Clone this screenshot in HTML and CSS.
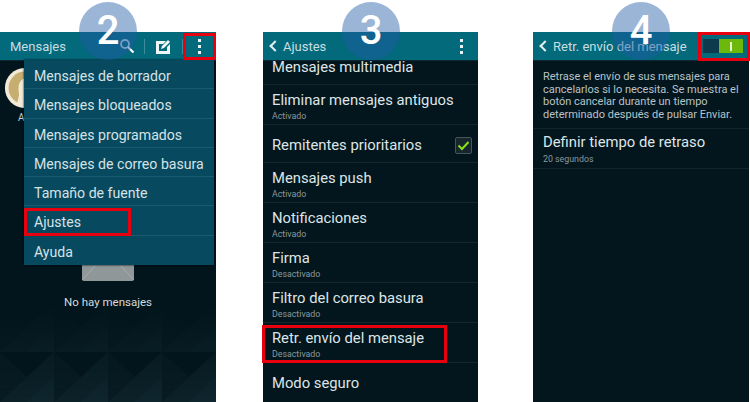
FILE: index.html
```html
<!DOCTYPE html>
<html lang="es">
<head>
    <meta charset="UTF-8">
    <title>Retrasar envío del mensaje</title>
    <link rel="stylesheet" href="styles.css">
</head>
<body>
    <div class="steps">
        <!-- paso 2 -->
        <div class="phone phone-one">
            <div class="bar bar-one">
                <span class="bar-title">Mensajes</span>
                <svg class="icon-search" width="16" height="16" viewBox="0 0 16 16"><circle cx="6" cy="6" r="4" fill="none" stroke="#b9d6de" stroke-width="1.8"/><path d="M9 9L14.5 14.5" stroke="#fff" stroke-width="2.2"/></svg>
                <span class="bar-sep"></span>
                <svg class="icon-compose" width="15" height="15" viewBox="0 0 15 15"><path d="M0 2h10L7 5H3v7h8V8l3-3v10H0z" fill="#eef6f7"/><path d="M5 10l1-3 6-6 2 2-6 6z" fill="#eef6f7"/></svg>
                <span class="bar-sep"></span>
                <span class="dots"><i></i><i></i><i></i></span>
            </div>
            <div class="avatar-col">
                <svg class="avatar" width="42" height="42" viewBox="0 0 46 46"><circle cx="23" cy="23" r="22" fill="#f2ead6"/><circle cx="23" cy="23" r="18" fill="#c6ad70"/><path d="M14 41c2-8 3-10 2-15-1-8 3-14 9-14 6 0 9 5 9 11 0 3 3 5 2 7-1 3-3 2-3 5 0 3 0 5 1 7-6 3-14 3-20-1z" fill="#f2ead6"/></svg>
                <span class="avatar-name">A</span>
            </div>
            <svg class="tiles" width="216" height="100" viewBox="0 0 216 100">
                <defs>
                    <pattern id="tri" width="54" height="50" patternUnits="userSpaceOnUse">
                        <path d="M0 50L54 0V50z" fill="#0c2229"/>
                        <path d="M0 0L27 25L0 50z" fill="#081c23"/>
                        <path d="M27 50L54 25V50z" fill="#0f262e"/>
                    </pattern>
                    <linearGradient id="fade" x1="0" y1="0" x2="0" y2="1">
                        <stop offset="0" stop-color="#fff" stop-opacity="0"/>
                        <stop offset="1" stop-color="#fff"/>
                    </linearGradient>
                    <mask id="fadeMask"><rect width="216" height="100" fill="url(#fade)"/></mask>
                </defs>
                <rect width="216" height="100" fill="url(#tri)" mask="url(#fadeMask)"/>
            </svg>
            <svg class="envelope" width="52" height="16" viewBox="0 0 52 16"><path d="M0 0h52v14a2 2 0 0 1-2 2H2a2 2 0 0 1-2-2z" fill="#8f9799"/><path d="M0 15L14 0M52 15L38 0" stroke="#a7adae" fill="none"/></svg>
            <p class="empty">No hay mensajes</p>
            <ul class="menu">
                <li>Mensajes de borrador</li>
                <li>Mensajes bloqueados</li>
                <li>Mensajes programados</li>
                <li>Mensajes de correo basura</li>
                <li>Tamaño de fuente</li>
                <li>Ajustes</li>
                <li>Ayuda</li>
            </ul>
            <div class="mark mark-dots"></div>
            <div class="mark mark-ajustes"></div>
            <div class="badge">2</div>
        </div>

        <!-- paso 3 -->
        <div class="phone phone-two">
            <div class="bar">
                <span class="back"></span>
                <span class="bar-title">Ajustes</span>
                <span class="dots dots-two"><i></i><i></i><i></i></span>
            </div>
            <div class="row row-clip"><div class="row-title">Mensajes multimedia</div></div>
            <div class="row"><div class="row-title">Eliminar mensajes antiguos</div><div class="row-sub">Activado</div></div>
            <div class="row row-check">
                <div class="row-title">Remitentes prioritarios</div>
                <svg class="check" width="17" height="17" viewBox="0 0 17 17"><rect x=".5" y=".5" width="16" height="16" rx="1.5" fill="#16262c" stroke="#47545a"/><path d="M3.5 8.5l3.5 3.5 6.5-7" fill="none" stroke="#8be01a" stroke-width="2"/></svg>
            </div>
            <div class="row"><div class="row-title">Mensajes push</div><div class="row-sub">Activado</div></div>
            <div class="row"><div class="row-title">Notificaciones</div><div class="row-sub">Activado</div></div>
            <div class="row"><div class="row-title">Firma</div><div class="row-sub">Desactivado</div></div>
            <div class="row"><div class="row-title">Filtro del correo basura</div><div class="row-sub">Desactivado</div></div>
            <div class="row"><div class="row-title">Retr. envío del mensaje</div><div class="row-sub">Desactivado</div></div>
            <div class="row row-last"><div class="row-title">Modo seguro</div></div>
            <div class="mark mark-retr"></div>
            <div class="badge">3</div>
        </div>

        <!-- paso 4 -->
        <div class="phone phone-three">
            <div class="bar">
                <span class="back"></span>
                <span class="bar-title">Retr. envío del mensaje</span>
                <span class="switch"><span class="switch-on"><i></i></span></span>
            </div>
            <p class="intro">Retrase el envío de sus mensajes para cancelarlos si lo necesita. Se muestra el botón cancelar durante un tiempo determinado después de pulsar Enviar.</p>
            <div class="row"><div class="row-title">Definir tiempo de retraso</div><div class="row-sub">20 segundos</div></div>
            <div class="mark mark-switch"></div>
            <div class="badge">4</div>
        </div>
    </div>
</body>
</html>
```

FILE: styles.css
```css
html, body {
    margin: 0;
    padding: 0;
    background: #fff;
}
body {
    font-family: Roboto, "Noto Sans", sans-serif;
    color: #dfe5e6;
    overflow: hidden;
}
.steps {
    display: flex;
    width: 750px;
    height: 402px;
    padding-top: 32px;
    box-sizing: border-box;
}
.phone {
    position: relative;
    height: 370px;
    background: #03161e;
    flex: none;
}
.phone-one {
    width: 216px;
    background: #02151c;
}
.phone-two {
    width: 215px;
    margin-left: 47px;
}
.phone-three {
    width: 216px;
    margin-left: 55px;
}
.bar {
    display: flex;
    align-items: center;
    height: 28px;
    background: #036a7c;
    border-bottom: 1px solid #0b2a33;
    font-size: 13px;
    color: #c9dde1;
}
.bar-one {
    padding-left: 10px;
}
.bar-title {
    flex: 1;
    white-space: nowrap;
}
.back {
    width: 8px;
    height: 8px;
    margin: 0 4px 0 8px;
    border-left: 2px solid #e6f0f2;
    border-bottom: 2px solid #e6f0f2;
    transform: rotate(45deg);
    box-sizing: border-box;
}
.icon-search {
    margin-right: 9px;
}
.icon-compose {
    margin: 0 11px;
}
.bar-sep {
    width: 1px;
    height: 15px;
    background: #3f8c9a;
}
.dots {
    display: flex;
    flex-direction: column;
    gap: 3px;
    width: 3px;
    margin: 0 15px 0 15px;
}
.dots i {
    width: 3px;
    height: 3px;
    background: #e8f1f3;
}
.dots-two {
    margin: 0 15px 0 0;
}
.avatar-col {
    position: absolute;
    left: 4px;
    top: 35px;
    width: 20px;
    overflow: hidden;
}
.avatar {
    display: block;
}
.avatar-name {
    display: block;
    margin: 3px 0 0 14px;
    font-size: 10px;
    color: #c6cfd2;
}
.tiles {
    position: absolute;
    left: 0;
    bottom: 0;
}
.envelope {
    position: absolute;
    left: 82px;
    top: 233px;
}
.empty {
    position: absolute;
    left: 0;
    right: 0;
    top: 263px;
    margin: 0;
    text-align: center;
    font-size: 11.5px;
    color: #d5dadb;
}
.menu {
    position: absolute;
    left: 24px;
    top: 28px;
    width: 190px;
    height: 205px;
    margin: 0;
    padding: 0;
    list-style: none;
    background: #07495f;
    box-shadow: 0 0 2px #000;
}
.menu li {
    height: 29.3px;
    line-height: 33px;
    padding-left: 10px;
    box-sizing: border-box;
    font-size: 14.1px;
    color: #d6e2e5;
    border-bottom: 1px solid #1a5a6e;
}
.menu li:last-child {
    border-bottom: none;
}
.row {
    display: flex;
    flex-direction: column;
    justify-content: center;
    height: 40px;
    padding: 4px 0 0 9px;
    box-sizing: border-box;
    border-bottom: 1px solid #14262d;
}
.row-clip {
    height: 24px;
    justify-content: flex-end;
    padding: 0 0 8px 9px;
}
.row-check {
    flex-direction: row;
    align-items: center;
    justify-content: space-between;
    height: 38px;
    padding: 4px 6px 0 9px;
}
.row-last {
    padding-top: 1px;
    border-bottom: none;
}
.row-title {
    font-size: 14.8px;
    line-height: 17px;
    white-space: nowrap;
}
.row-sub {
    font-size: 8.8px;
    line-height: 11px;
    margin-top: 2px;
    color: #8c989c;
}
.intro {
    margin: 0;
    padding: 10px 10px 7px;
    font-size: 11px;
    line-height: 12.5px;
    color: #b9c3c6;
    border-bottom: 1px solid #14262d;
}
.phone-three .row {
    padding: 1px 0 0 10px;
}
.phone-three .row-sub {
    margin-top: 3px;
}
.switch {
    display: flex;
    justify-content: flex-end;
    width: 40px;
    height: 14px;
    margin-right: 6px;
    background: #0d3a4c;
}
.switch-on {
    display: flex;
    align-items: center;
    justify-content: center;
    width: 24px;
    height: 14px;
    background: #6cb90c;
}
.switch-on i {
    width: 2px;
    height: 9px;
    background: #e8f5d0;
}
.mark {
    position: absolute;
    border: 3px solid #e8000e;
    box-sizing: border-box;
}
.mark-dots {
    left: 183px;
    top: 1px;
    width: 33px;
    height: 27px;
}
.mark-ajustes {
    left: 24px;
    top: 176px;
    width: 107px;
    height: 28px;
}
.mark-retr {
    left: -1px;
    top: 293px;
    width: 185px;
    height: 38px;
}
.mark-switch {
    left: 165px;
    top: 0;
    width: 52px;
    height: 29px;
}
.badge {
    position: absolute;
    top: -30px;
    left: 79px;
    width: 58px;
    height: 58px;
    border-radius: 50%;
    background: rgba(31, 92, 164, 0.45);
    color: #fff;
    font-size: 40px;
    font-weight: 500;
    line-height: 58px;
    text-align: center;
}
```
